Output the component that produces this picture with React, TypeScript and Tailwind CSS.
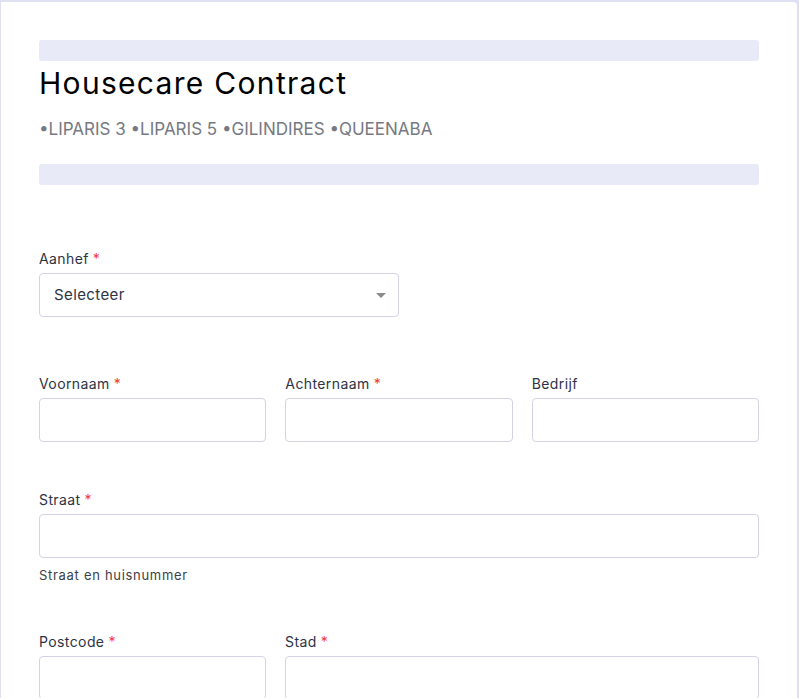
import React from 'react';

const font = { fontFamily: 'Inter, "Noto Sans", sans-serif' };

function Label({ text, required }: { text: string; required?: boolean }) {
  return (
    <label className="block text-[14px] leading-[20px] tracking-[0.4px] text-[#2c3345] mb-[4px]">
      {text}
      {required && <span className="text-[#f23a3c] ml-[4px]">*</span>}
    </label>
  );
}

function Input() {
  return (
    <input
      type="text"
      className="block w-full h-[44px] rounded-[4px] border border-[#d3d3e5] bg-white px-[14px] text-[15px] outline-none"
    />
  );
}

export default function App() {
  return (
    <div className="min-h-screen bg-[#dfe0f1] pt-[2px] pl-[1px] pr-[2px]" style={font}>
      <div className="bg-white rounded-tr-[4px] px-[38px] pt-[38px] pb-[60px] min-h-[720px]">
        {/* header */}
        <div className="h-[21px] rounded-[3px] bg-[#e8eaf8]" />
        <h1 className="mt-[4px] text-[30px] leading-[36px] tracking-[1.3px] font-normal text-black">
          Housecare Contract
        </h1>
        <p className="mt-[16px] text-[17px] leading-[24px] text-[#767982]">
          •LIPARIS 3 •LIPARIS 5 •GILINDIRES •QUEENABA
        </p>
        <div className="mt-[23px] h-[21px] rounded-[3px] bg-[#e8eaf8]" />

        {/* Aanhef */}
        <div className="mt-[64px]">
          <Label text="Aanhef" required />
          <div className="relative w-[360px]">
            <div className="h-[44px] rounded-[4px] border border-[#d3d3e5] bg-white pl-[14px] flex items-center text-[15px] tracking-[0.4px] text-[#2c3345]">
              Selecteer
            </div>
            <div className="absolute right-[13px] top-[20px] w-0 h-0 border-l-[5px] border-r-[5px] border-t-[5px] border-l-transparent border-r-transparent border-t-[#8a8a8f]" />
          </div>
        </div>

        {/* names */}
        <div className="mt-[57px] grid grid-cols-3 gap-x-[19px]">
          <div>
            <Label text="Voornaam" required />
            <Input />
          </div>
          <div>
            <Label text="Achternaam" required />
            <Input />
          </div>
          <div>
            <Label text="Bedrijf" />
            <Input />
          </div>
        </div>

        {/* straat */}
        <div className="mt-[48px]">
          <Label text="Straat" required />
          <Input />
          <p className="mt-[8px] text-[13px] leading-[18px] tracking-[0.7px] text-[#3b3f4a]">Straat en huisnummer</p>
        </div>

        {/* postcode / stad */}
        <div className="mt-[48px] grid grid-cols-[227px_1fr] gap-x-[19px]">
          <div>
            <Label text="Postcode" required />
            <Input />
          </div>
          <div>
            <Label text="Stad" required />
            <Input />
          </div>
        </div>
      </div>
    </div>
  );
}
